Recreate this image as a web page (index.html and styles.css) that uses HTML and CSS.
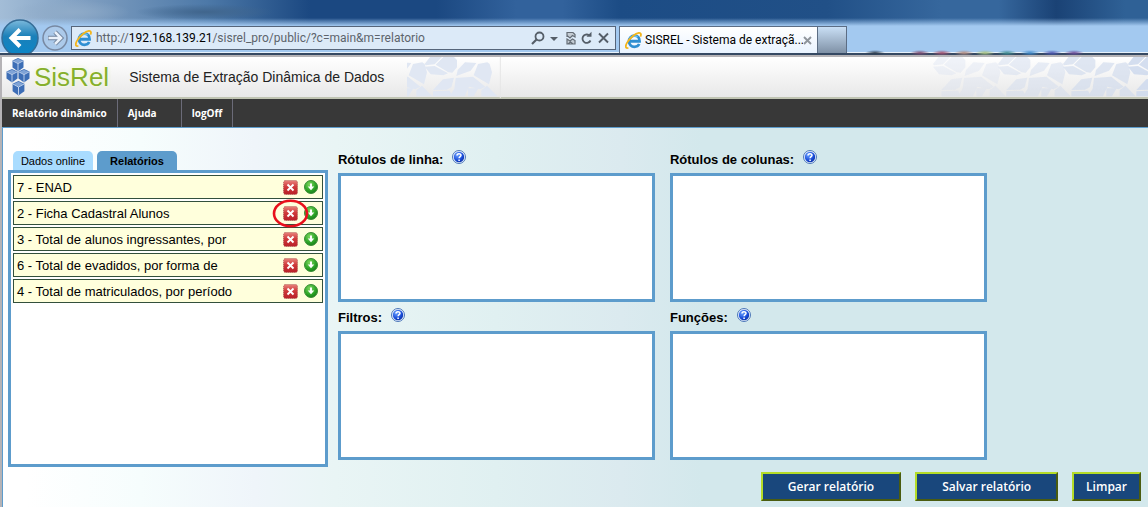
FILE: index.html
```html
<!DOCTYPE html>
<html lang="pt-BR">
<head>
<meta charset="utf-8">
<title>SISREL - Sistema de extração dinâmica</title>
<link rel="stylesheet" href="styles.css">
</head>
<body>
<svg class="defs" width="0" height="0" aria-hidden="true">
  <defs>
    <linearGradient id="redFill" x1="0" y1="0" x2="0" y2="1"><stop offset="0" stop-color="#e8837c"/><stop offset=".45" stop-color="#cf3a3a"/><stop offset="1" stop-color="#b81f28"/></linearGradient>
    <radialGradient id="greenFill" cx=".4" cy=".3" r=".75"><stop offset="0" stop-color="#7fd860"/><stop offset=".6" stop-color="#2ea628"/><stop offset="1" stop-color="#157a18"/></radialGradient>
    <radialGradient id="helpFill" cx=".35" cy=".3" r=".8"><stop offset="0" stop-color="#6ea4ff"/><stop offset=".6" stop-color="#1c50dc"/><stop offset="1" stop-color="#0b2f9f"/></radialGradient>
    <linearGradient id="backFill" x1="0" y1="0" x2="0" y2="1"><stop offset="0" stop-color="#7cb9dc"/><stop offset=".45" stop-color="#1b80b9"/><stop offset="1" stop-color="#0a86c8"/></linearGradient>
    <symbol id="del" viewBox="0 0 15 15">
      <rect x=".5" y=".5" width="14" height="14" rx="2" fill="url(#redFill)" stroke="#b56a62" stroke-dasharray="1 1"/>
      <path d="M4.500 4.500l6 6M10.500 4.500l-6 6" stroke="#fff" stroke-width="1.900"/>
    </symbol>
    <symbol id="down" viewBox="0 0 14 14">
      <circle cx="7" cy="7" r="6.500" fill="url(#greenFill)" stroke="#3a8e35"/>
      <path d="M6 3.500h2v3h2.300L7 10.300 3.700 6.500H6z" fill="#fff"/>
    </symbol>
    <symbol id="help" viewBox="0 0 14 14">
      <circle cx="7" cy="7" r="6.500" fill="#e9f1ff" stroke="#4d78b8"/>
      <circle cx="7" cy="7" r="5.200" fill="url(#helpFill)"/>
      <path d="M5 5.500C5 3.400 9 3.300 9 5.300 9 6.700 7.200 6.700 7.100 8.300M7.100 9.400v1.500" fill="none" stroke="#fff" stroke-width="1.500"/>
    </symbol>
    <symbol id="ie" viewBox="0 0 16 16">
      <path d="M4 8.700h9.700C13.800 5 11.600 3.300 9 3.300 6.100 3.300 3.800 5.600 3.800 8.700c0 3 2.200 5.200 5.100 5.200 2.100 0 3.700-.9 4.500-2.600" fill="none" stroke="#2f8fd2" stroke-width="2.600"/>
      <path d="M4.200 6.500C5.500 3.700 9.500 3 11.800 4.700" fill="none" stroke="#69c3f1" stroke-width="1.400"/>
      <path d="M3.200 14.800C.4 16 0 13.400 2 10 4.500 5.700 9.700 1.300 13 .9c2.300-.2 2.400 1.600 1.500 3.400" fill="none" stroke="#f3b51b" stroke-width="1.700"/>
    </symbol>
    <symbol id="cube" viewBox="0 0 12 14">
      <path d="M6 0l5.500 2.500v7L6 13.500.5 9.500v-7z" fill="#3d6eb6"/>
      <path d="M6 .7l4.500 2L6 5.200 1.500 2.700z" fill="#7fa3d6"/>
      <path d="M.8 2.800L6 5.600l5.200-2.800M6 5.600V13" fill="none" stroke="#d5e2f5" stroke-width=".8"/>
    </symbol>
    <g id="tile">
      <path d="M75 30L92 8h36L105 31l-27 3zM75 38l30-2 40 22-14 6-38-3zM108 32l24-24h30l10 10v22l-14 16-12-1zM170 66l4-18 22-23 34 2-17 23zM235 30l28-5 7 5 7 25-9 36-46-27zM168 72l52-4 37 30-15 8-34-8-13 29h-45l14-23zM100 108l30-32 33-5-8 29-14 7zM100 112l50-2 9 17h-59zM205 103h31l-14 24h-17zM245 109l17-14 31 32h-48z"/>
    </g>
  </defs>
</svg>

<header class="browser">
  <div class="toolbar">
    <button class="back" aria-label="Voltar"><svg width="38" height="38" viewBox="0 0 38 38"><circle cx="19" cy="19" r="18" fill="url(#backFill)" stroke="#356c96" stroke-width="1.500"/><path d="M29.500 19H12M19 10.500L10.500 19l8.500 8.500" fill="none" stroke="#fff" stroke-width="4"/></svg></button>
    <button class="forward" aria-label="Avançar"><svg width="26" height="26" viewBox="0 0 26 26"><circle cx="13" cy="13" r="12" fill="#b6cbe4" fill-opacity=".5" stroke="#7889a2" stroke-width="1.500"/><path d="M6 13h12M13 7l6 6-6 6" fill="none" stroke="#71839c" stroke-width="4.500"/><path d="M6.500 13h12M13 7l6 6-6 6" fill="none" stroke="#eaf1fa" stroke-width="2.500"/></svg></button>
    <div class="address">
      <svg width="17" height="17"><use href="#ie"/></svg>
      <span class="url">http://<b>192.168.139.21</b>/sisrel_pro/public/?c=main&amp;m=relatorio</span>
      <button aria-label="Pesquisar"><svg width="14" height="14" viewBox="0 0 14 14"><circle cx="8.500" cy="5.500" r="4" fill="none" stroke="#555e68" stroke-width="1.800"/><path d="M5.500 8.500L1 13" stroke="#555e68" stroke-width="2.200"/></svg></button>
      <button aria-label="Opções"><svg width="8" height="14" viewBox="0 0 8 14"><path d="M0 6h8L4 10z" fill="#555e68"/></svg></button>
      <button class="compat" aria-label="Modo de compatibilidade"><svg width="10" height="14" viewBox="0 0 10 14"><path d="M1 6V1.500h6l2 2V6L6.500 4.500 4 7 1 4.500M1 8l3 2 2.500-2L9 9.500V13H1zM2 13l2.500-2L7 13" fill="#c4ccd4" stroke="#646c75" stroke-width="1.200"/></svg></button>
      <button aria-label="Atualizar"><svg width="12" height="14" viewBox="0 0 12 14"><path d="M9.500 9.500A4.200 4.200 0 1 1 8 4.200" fill="none" stroke="#555e68" stroke-width="1.800"/><path d="M5.500 5.800h5V.8z" fill="#555e68"/></svg></button>
      <button aria-label="Parar"><svg width="11" height="14" viewBox="0 0 11 14"><path d="M1 2.500l9 9M10 2.500l-9 9" stroke="#555e68" stroke-width="1.900"/></svg></button>
    </div>
    <div class="tab">
      <svg width="17" height="17"><use href="#ie"/></svg>
      <span class="tab-title">SISREL - Sistema de extraçã...</span>
      <button aria-label="Fechar guia"><svg width="9" height="9" viewBox="0 0 9 9"><path d="M1 1l7 7M8 1L1 8" stroke="#8f959c" stroke-width="1.900"/></svg></button>
    </div>
    <button class="new-tab" aria-label="Nova guia"></button>
  </div>
</header>

<div class="page">
  <div class="banner">
    <svg class="cubes" width="27" height="39" viewBox="0 0 27 39"><use href="#cube" x="7" y="0" width="12" height="14"/><use href="#cube" x="1" y="11" width="12" height="14"/><use href="#cube" x="13" y="11" width="12" height="14"/><use href="#cube" x="7" y="23" width="13" height="15"/></svg>
    <span class="logo">SisRel</span>
    <h1>Sistema de Extração Dinâmica de Dados</h1>
    <svg class="motif" width="94" height="41" viewBox="22 9 282 123" fill="#e0e7f3"><use href="#tile" x="-195"/><use href="#tile"/><path d="M302 9v123" stroke="#e6e6e6" stroke-width="3"/></svg>
    <svg class="motif-right" width="220" height="41" viewBox="60 9 660 123" fill="#cfdaed"><use href="#tile" opacity=".3"/><use href="#tile" x="195" opacity=".45"/><use href="#tile" x="390" opacity=".65"/><use href="#tile" x="585" opacity=".9"/></svg>
  </div>
  <nav class="menu"><a href="#relatorio">Relatório dinâmico</a><a class="short" href="#ajuda">Ajuda</a><a href="#logoff">logOff</a></nav>

  <main>
    <div class="workspace">
      <section class="sources">
        <div class="tabs"><button>Dados online</button><button class="active">Relatórios</button></div>
        <ul class="panel">
          <li><span>7 - ENAD</span><button aria-label="Excluir"><svg width="15" height="15"><use href="#del"/></svg></button><button aria-label="Abrir"><svg width="14" height="14"><use href="#down"/></svg></button></li>
          <li><span>2 - Ficha Cadastral Alunos</span><button class="marked" aria-label="Excluir"><svg width="15" height="15"><use href="#del"/></svg><svg class="ring" width="37" height="29" viewBox="0 0 37 29"><ellipse cx="18.500" cy="14.500" rx="16.500" ry="12.800" fill="none" stroke="#e8101c" stroke-width="2.600"/></svg></button><button aria-label="Abrir"><svg width="14" height="14"><use href="#down"/></svg></button></li>
          <li><span>3 - Total de alunos ingressantes, por</span><button aria-label="Excluir"><svg width="15" height="15"><use href="#del"/></svg></button><button aria-label="Abrir"><svg width="14" height="14"><use href="#down"/></svg></button></li>
          <li><span>6 - Total de evadidos, por forma de</span><button aria-label="Excluir"><svg width="15" height="15"><use href="#del"/></svg></button><button aria-label="Abrir"><svg width="14" height="14"><use href="#down"/></svg></button></li>
          <li><span>4 - Total de matriculados, por período</span><button aria-label="Excluir"><svg width="15" height="15"><use href="#del"/></svg></button><button aria-label="Abrir"><svg width="14" height="14"><use href="#down"/></svg></button></li>
        </ul>
      </section>
      <div class="targets">
        <section><h2>Rótulos de linha: <button aria-label="Ajuda"><svg width="14" height="14"><use href="#help"/></svg></button></h2><div class="drop"></div></section>
        <section><h2>Rótulos de colunas: <button aria-label="Ajuda"><svg width="14" height="14"><use href="#help"/></svg></button></h2><div class="drop"></div></section>
        <section><h2>Filtros: <button aria-label="Ajuda"><svg width="14" height="14"><use href="#help"/></svg></button></h2><div class="drop"></div></section>
        <section><h2>Funções: <button aria-label="Ajuda"><svg width="14" height="14"><use href="#help"/></svg></button></h2><div class="drop"></div></section>
      </div>
    </div>
    <div class="actions"><button>Gerar relatório</button><button>Salvar relatório</button><button>Limpar</button></div>
  </main>
</div>
</body>
</html>
```

FILE: styles.css
```css
* { box-sizing: border-box; }
body {
  margin: 0;
  min-height: 100vh;
  display: flex;
  flex-direction: column;
  font-family: "Liberation Sans", Arial, sans-serif;
  font-size: 13px;
  color: #000;
}
button {
  margin: 0;
  padding: 0;
  border: 0;
  background: none;
  font: inherit;
  color: inherit;
}
svg { display: block; flex: none; }
.defs { position: absolute; }

.browser {
  height: 57px;
  padding-top: 19px;
  overflow: hidden;
  border-bottom: 2px solid #b5b3b6;
  background:
    radial-gradient(ellipse 10px 3px at 875px 53px, #2d3d50, transparent),
    radial-gradient(ellipse 10px 3px at 920px 53px, #7a4a70, transparent),
    radial-gradient(ellipse 10px 3px at 942px 53px, #a05070, transparent),
    radial-gradient(ellipse 10px 3px at 964px 53px, #b08a80, transparent),
    radial-gradient(ellipse 10px 3px at 985px 53px, #a5c080, transparent),
    radial-gradient(ellipse 10px 3px at 1007px 53px, #3c8a90, transparent),
    radial-gradient(ellipse 10px 3px at 1030px 53px, #3a86c8, transparent),
    radial-gradient(ellipse 10px 3px at 1052px 53px, #4a55b0, transparent),
    radial-gradient(ellipse 10px 3px at 1074px 53px, #6a4a98, transparent),
    linear-gradient(180deg, transparent 18px, #a3c9f0 26px, #a3c9f0 52px, #e8f2fb 52px, #e8f2fb 53px, #354963 53px),
    radial-gradient(ellipse 70px 8px at 205px 12px, #40658c, transparent),
    radial-gradient(ellipse 60px 12px at 70px 12px, #8fabc8, transparent),
    linear-gradient(90deg, #a3bdd7 0, #7c9cbf 8%, #4d79a8 18%, #1b4881 27%, #1b4881 38%, #32629c 45%, #32629c 49%, #1c4c85 54%, #215087 72%, #36679d 82%, #36679d 87%, #1a4275 92%, #2f6196 98%);
}
.toolbar { display: flex; align-items: flex-start; height: 34px; overflow: hidden; }
.back { margin-left: 1px; }
.forward { margin: 6px 3px 0 3px; }
.address {
  flex: 0 1 545px;
  display: flex;
  align-items: center;
  height: 24px;
  margin-top: 7px;
  padding: 0 6px 0 3px;
  border: 1px solid #56657a;
  background: #dceaf8;
}
.url {
  flex: 1;
  padding-left: 4px;
  white-space: nowrap;
  overflow: hidden;
  font-family: Roboto, "Noto Sans", sans-serif;
  font-size: 12px;
  color: #5d646c;
}
.url b { font-weight: 400; color: #000; }
.address button { margin-left: 5px; }
.address .compat { margin-left: 8px; }
.tab {
  flex: 0 1 199px;
  min-width: 0;
  display: flex;
  align-items: center;
  height: 27px;
  margin: 7px 0 0 3px;
  padding: 0 5px;
  border: 1px solid #5c6d84;
  border-bottom: 0;
  background: linear-gradient(#fff, #e9f3ff);
}
.tab-title {
  flex: 1;
  padding-left: 3px;
  white-space: nowrap;
  overflow: hidden;
  font-family: Roboto, "Noto Sans", sans-serif;
  font-size: 12px;
}
.new-tab {
  width: 29px;
  height: 27px;
  margin-top: 7px;
  border: 1px solid #5c6d84;
  border-width: 1px 1px 0 0;
  background: linear-gradient(#c9dff5, #7f91a6);
}

.page {
  flex: 1;
  display: flex;
  flex-direction: column;
  border-left: 2px solid #b5b3b6;
}
.banner {
  display: flex;
  align-items: center;
  height: 42px;
  border-bottom: 2px solid #c0c4b2;
  background: linear-gradient(#fff, #e8e8e8);
}
.cubes { margin-left: 3px; }
.logo {
  margin-left: 2px;
  font-size: 26px;
  line-height: 32px;
  color: #86b02b;
  text-shadow: 0 0 3px #fff, 0 0 4px #e5f3bb;
}
.banner h1 {
  margin: 0 0 0 20px;
  font-size: 14px;
  line-height: 20px;
  font-weight: 400;
  color: #222;
  white-space: nowrap;
}
.motif { margin-left: 23px; }
.motif-right { margin-left: auto; }

.menu {
  display: flex;
  height: 28px;
  background: #383838;
}
.menu a {
  padding: 0 10px;
  border-right: 1px solid #6b6b78;
  font-family: "Open Sans", sans-serif;
  font-size: 10px;
  line-height: 28px;
  font-weight: 700;
  color: #fff;
  text-decoration: none;
}
.menu .short { min-width: 64px; }

main {
  flex: 1;
  padding: 16px 7px 6px 5px;
  border: 1px solid #5d9ccc;
  border-width: 1px 0 0 1px;
  background: linear-gradient(90deg, #fff 2%, #f6fdfd 12%, #eff5fa 22%, #e9f5f5 29%, #e0f0f1 43%, #dbeaef 54%, #d3e8ec 61%);
}
.workspace {
  display: grid;
  grid-template-columns: 320fr 649fr;
  gap: 10px;
  padding-right: 13.6%;
}
.sources { display: flex; flex-direction: column; padding-top: 7px; }
.tabs { display: flex; gap: 4px; padding-left: 5px; }
.tabs button {
  width: 80px;
  height: 19px;
  border-radius: 5px 5px 0 0;
  background: #a9dcff;
  font-size: 11px;
}
.tabs .active { background: #5d9ccc; font-weight: 700; }
.panel {
  min-height: 297px;
  margin: 0;
  padding: 2px;
  border: 3px solid #5d9ccc;
  background: #fff;
  list-style: none;
}
.panel li {
  display: flex;
  align-items: center;
  gap: 6px;
  height: 24px;
  margin-bottom: 2px;
  padding: 0 4px 0 3px;
  border: 1px solid #33503c;
  background: #ffffdc;
}
.panel span { flex: 1; white-space: nowrap; }
.marked { position: relative; }
.ring { position: absolute; left: -11px; top: -7px; z-index: 1; }
.targets {
  display: grid;
  grid-template-columns: 1fr 1fr;
  column-gap: 15px;
  align-content: start;
}
.targets h2 {
  display: flex;
  align-items: flex-start;
  gap: 9px;
  margin: 0;
  padding-top: 6px;
  height: 29px;
  font-size: 13px;
  line-height: 20px;
}
.drop { height: 129px; border: 3px solid #5d9ccc; background: #fff; }

.actions {
  display: flex;
  justify-content: flex-end;
  gap: 14px;
  padding-top: 5px;
}
.actions button {
  height: 29px;
  padding: 0 25px;
  border: 2px solid;
  border-color: #b4dc28 #4a5c10 #4a5c10 #b4dc28;
  background: #19477c;
  font-family: "Open Sans", sans-serif;
  font-size: 12px;
  font-weight: 600;
  color: #fff;
}
.actions button:last-child { padding: 0 12px; }
```
